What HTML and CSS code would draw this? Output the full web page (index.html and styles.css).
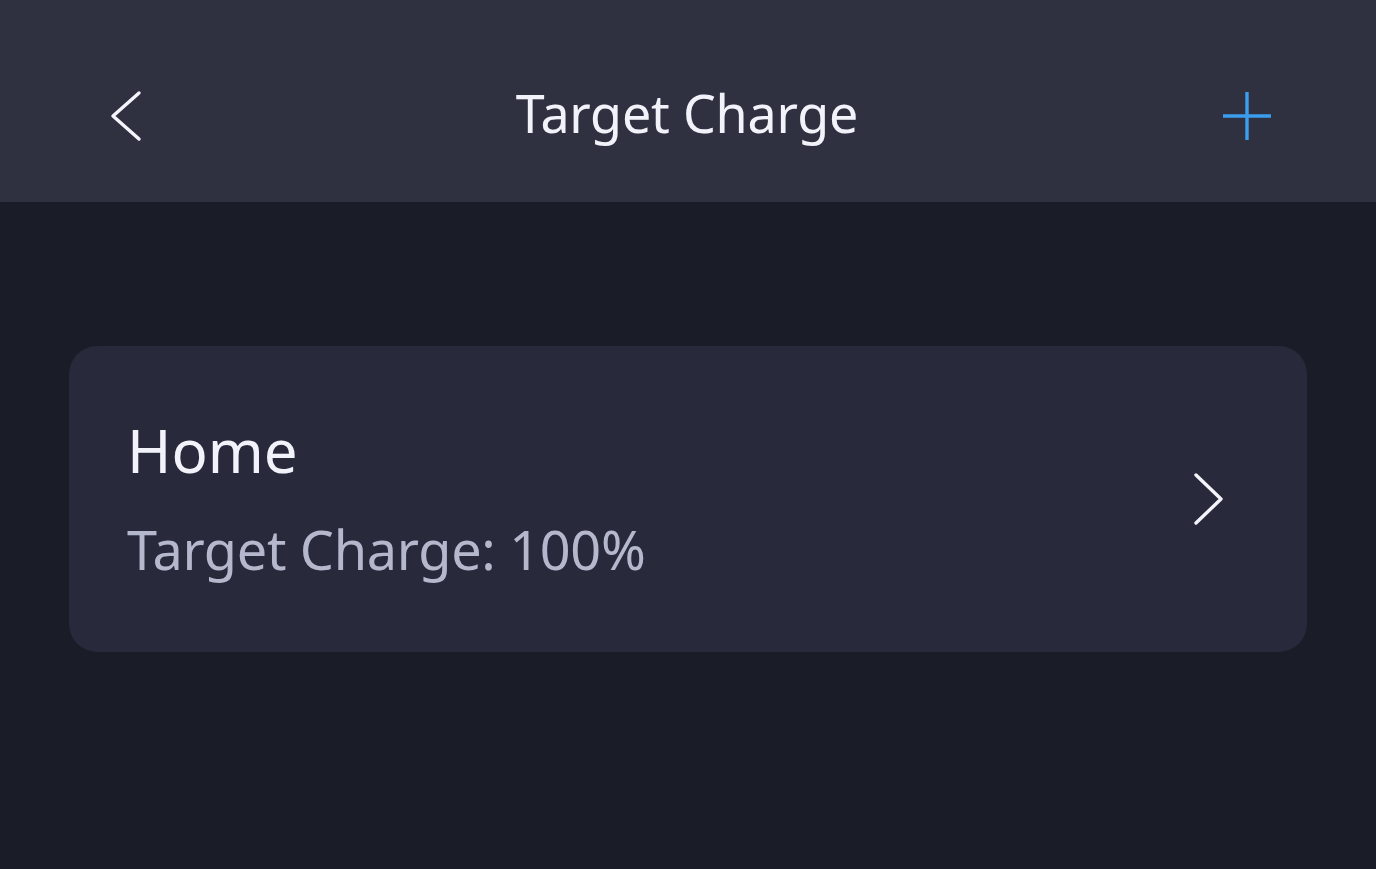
FILE: index.html
```html
<!DOCTYPE html>
<html>
<head>
<meta charset="utf-8">
<link rel="stylesheet" href="styles.css">
</head>
<body>
<header class="topbar">
  <button class="icon-btn back" aria-label="Back">
    <svg width="48" height="60" viewBox="0 0 48 60"><path d="M33 7 L7 30 L33 53" fill="none" stroke="#f4f5fb" stroke-width="3.4" stroke-linecap="round" stroke-linejoin="round"/></svg>
  </button>
  <h1 class="title">Target Charge</h1>
  <button class="icon-btn add" aria-label="Add">
    <svg width="50" height="50" viewBox="0 0 50 50"><path d="M25 1 V49 M1 25 H49" fill="none" stroke="#3b9ded" stroke-width="3.4"/></svg>
  </button>
</header>
<main class="content">
  <div class="card">
    <div class="card-text">
      <div class="card-title">Home</div>
      <div class="card-sub">Target Charge: 100%</div>
    </div>
    <svg class="chev" width="34" height="54" viewBox="0 0 34 54"><path d="M3 3 L28 27 L3 51" fill="none" stroke="#f4f5fb" stroke-width="3.4" stroke-linecap="round" stroke-linejoin="round"/></svg>
  </div>
</main>
</body>
</html>
```

FILE: styles.css
```css
html, body {
  margin: 0;
  padding: 0;
  background: #1a1c27;
  font-family: "Noto Sans", "Open Sans", sans-serif;
  height: 100%;
}
.topbar {
  height: 202px;
  background: #2f3141;
  display: flex;
  align-items: center;
  justify-content: space-between;
  padding: 0 104px 0 106px;
  box-sizing: border-box;
}
.icon-btn {
  background: none;
  border: none;
  padding: 0;
  display: flex;
  margin-top: 30px;
}
.back { width: 48px; height: 60px; }
.add { width: 50px; height: 50px; margin-left: 2px; }
.title {
  margin: 0;
  margin-top: 22px;
  font-size: 52px;
  font-weight: 400;
  color: #f2f3fa;
  letter-spacing: -0.2px;
}
.content {
  padding: 144px 69px 0 69px;
}
.card {
  background: #282a3b;
  border-radius: 28px;
  height: 306px;
  display: flex;
  align-items: center;
  justify-content: space-between;
  padding: 0 80px 0 58px;
  box-sizing: border-box;
}
.card-title {
  font-size: 60px;
  color: #f2f3fa;
  line-height: 1;
  margin-top: -2px;
}
.card-sub {
  font-size: 54px;
  color: #b5b8cc;
  line-height: 1;
  margin-top: 42px;
  letter-spacing: -0.3px;
}
.chev { margin-top: 0px; }
```
